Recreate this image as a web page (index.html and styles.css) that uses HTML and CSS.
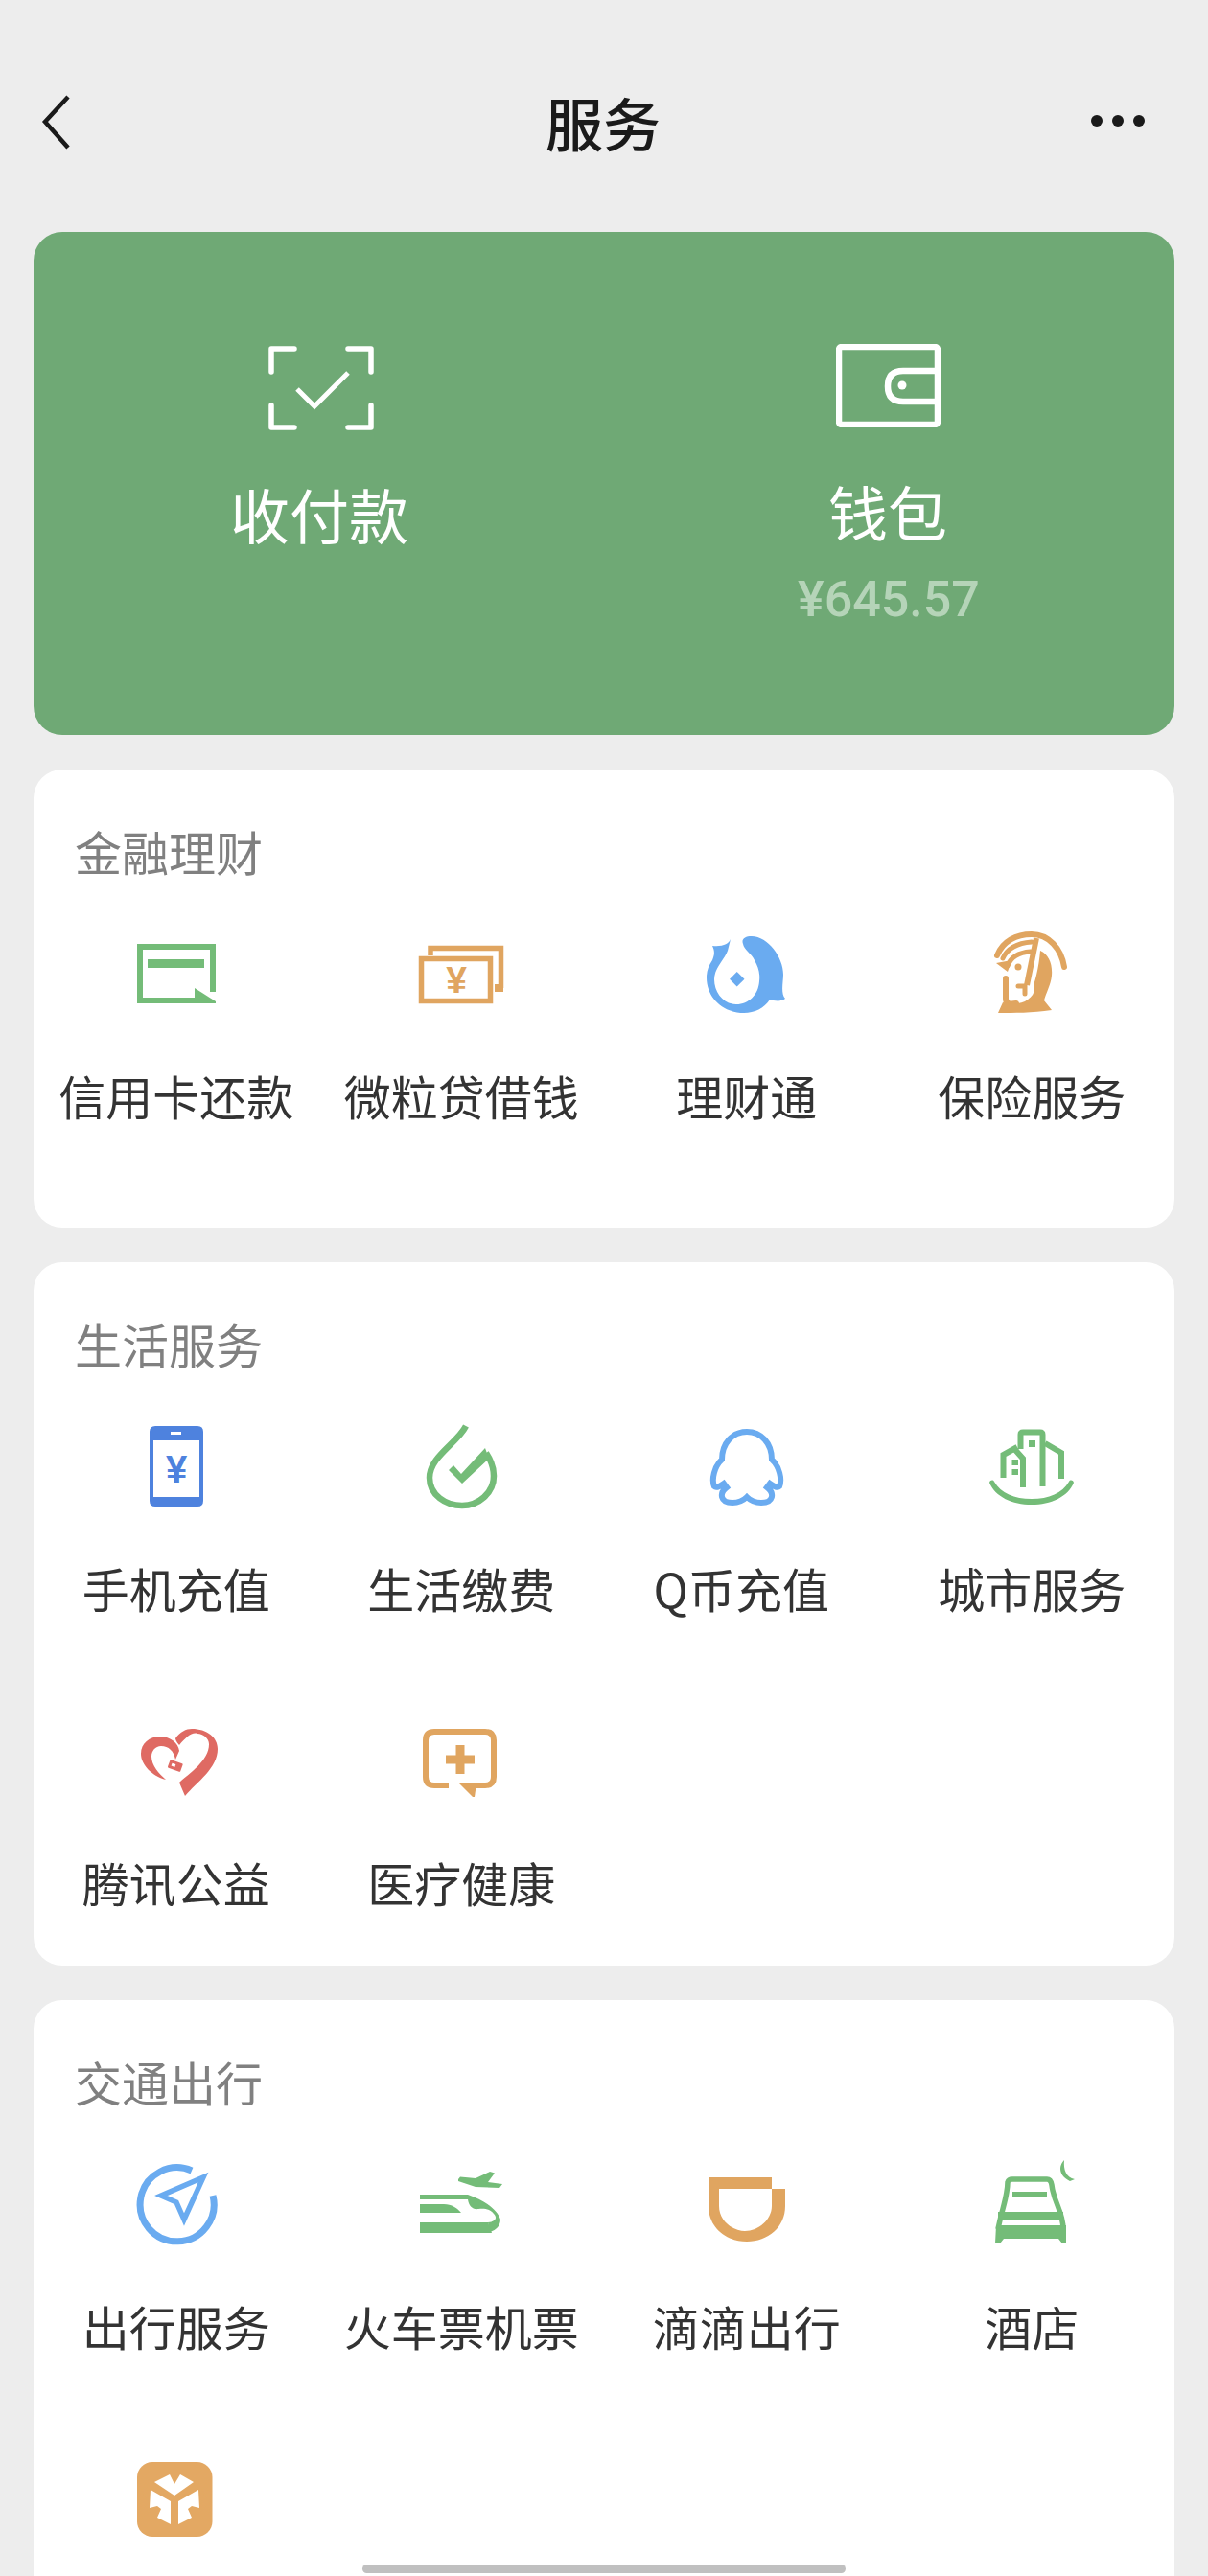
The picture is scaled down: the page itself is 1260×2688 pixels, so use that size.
FILE: index.html
```html
<!doctype html>
<html lang="zh-CN">
  <head>
    <meta charset="utf-8">
    <title>服务</title>
    <meta name="viewport" content="width=device-width, initial-scale=1">
    <link rel="stylesheet" href="styles.css">
  </head>
  <body>
    <header class="topbar">
      <svg class="back" width="32" height="58" viewBox="0 0 32 58"><path d="M28 2 L4 28 L28 55" fill="none" stroke="#1a1a1a" stroke-width="4.5"/></svg>
      <h1>服务</h1>
      <svg class="more" width="58" height="14" viewBox="0 0 58 14"><circle cx="7" cy="7" r="6"/><circle cx="29" cy="7" r="6"/><circle cx="51" cy="7" r="6"/></svg>
    </header>
    <main>
      <section class="hero">
        <div class="hero-item pay">
          <svg width="110" height="88" viewBox="0 0 110 88" fill="none" stroke="#fff" stroke-width="5.5" stroke-linejoin="round" stroke-linecap="round">
            <path d="M27 3 H3 V27 M83 3 H107 V27 M27 85 H3 V62 M83 85 H107 V62"/>
            <path d="M30 45 L48 63 L83 28" stroke-width="5" stroke-linecap="butt" stroke-linejoin="miter"/>
          </svg>
          <div class="hero-label">收付款</div>
        </div>
        <div class="hero-item wallet">
          <svg width="109" height="87" viewBox="0 0 109 87" fill="none" stroke="#fff" stroke-width="6.5">
            <rect x="3" y="3" width="103" height="81" rx="3"/>
            <path d="M106 28 H70 Q54 28 54 44 Q54 60 70 60 H106"/>
            <circle cx="69" cy="43" r="4.5" fill="#fff" stroke="none"/>
          </svg>
          <div class="hero-label">钱包</div>
          <div class="hero-amount">¥645.57</div>
        </div>
      </section>

      <section class="card card-tall">
        <h2>金融理财</h2>
        <div class="grid">
          <div class="item">
            <svg class="icon green" viewBox="0 0 100 100">
              <path class="line" d="M88 69 V22 H12 V78 H69" stroke-width="6"/>
              <rect x="20" y="35" width="59" height="9"/>
              <path d="M69 65 L91 79 V81 H69 Z"/>
            </svg>
            <div class="label">信用卡还款</div>
          </div>
          <div class="item">
            <svg class="icon orange" viewBox="0 0 100 100">
              <path class="line" d="M18 31 V23.5 H91.5 V65" stroke-width="5.5"/>
              <rect x="85" y="61" width="9" height="8"/>
              <rect class="line" x="8.5" y="34.5" width="72" height="44" stroke-width="5.5"/>
              <text class="yen yen-bold" x="45" y="70" font-size="39" text-anchor="middle">¥</text>
            </svg>
            <div class="label">微粒贷借钱</div>
          </div>
          <div class="item">
            <svg class="icon blue" viewBox="0 0 100 100">
              <path d="M33 14 C31 19 25 22 14 21 C17 27 16 31 14 36 C10 42 8 47 8 54 C8 75 25 91 47 91 C58 91 68 86 74 77 C78 78 85 80 90 76 C85 71 88 58 88 51 C88 33 72 11 55 11 C48 11 44 14 46 19 C47 25 55 29 58 36 C62 43 64 50 63 58 C62 72 52 82 39 82 C26 82 16 70 16 56 C16 44 27 35 30 26 C31 22 32 18 33 14 Z"/>
              <path d="M39.7 48 L47.5 55.7 L39.7 63.5 L32 55.7 Z"/>
            </svg>
            <div class="label">理财通</div>
          </div>
          <div class="item">
            <svg class="icon orange" viewBox="0 0 100 100">
              <g class="line" stroke-width="6" stroke-linecap="round">
                <path d="M14 31 C20 16 34 9 50 9 C68 9 81 24 84 43"/>
                <path d="M20 34 C25 23 36 18 50 17" stroke-width="5"/>
                <path d="M25 42 C28 33 36 28 49 27" stroke-width="5"/>
                <path d="M55 13 L45 62" stroke-linecap="butt"/>
                <path d="M23 55 V76 C23 82 28 82 34 81"/>
                <path d="M36 63 H43 V71" stroke-width="5"/>
              </g>
              <path d="M13 39 L29 36 L25 48 Z"/>
              <circle cx="36" cy="43" r="3.5"/>
              <path d="M59 26 C68 30 72 40 71 52 C70 62 65 70 63 78 L71 88 C50 91 32 91 15 91 L20 80 C30 82 40 82 46 77 C52 73 54 68 52 62 C56 50 58 38 59 26 Z"/>
            </svg>
            <div class="label">保险服务</div>
          </div>
        </div>
      </section>

      <section class="card">
        <h2>生活服务</h2>
        <div class="grid">
          <div class="item">
            <svg class="icon royal" viewBox="0 0 100 100">
              <path fill-rule="evenodd" d="M28 8 H72 Q78 8 78 14 V86 Q78 92 72 92 H28 Q22 92 22 86 V14 Q22 8 28 8 Z M26 23 V82 H74 V23 Z M44 14 V17 H55 V14 Z"/>
              <text class="yen yen-bold" x="50" y="67" font-size="40" text-anchor="middle">¥</text>
            </svg>
            <div class="label">手机充值</div>
          </div>
          <div class="item">
            <svg class="icon green" viewBox="0 0 100 100">
              <path class="line" d="M55 8 C46 26 17 40 17 62 C17 80 34 91 51 91 C68 91 84 78 84 60 C84 50 80 42 76 36" stroke-width="6.5"/>
              <path d="M75 31 L79 42 L51 68 L37 54 L42 49 L50 58 Z"/>
            </svg>
            <div class="label">生活缴费</div>
          </div>
          <div class="item">
            <svg class="icon blue" viewBox="0 0 100 100">
              <path class="line" d="M29 72 L26 68 C22 71 18 73 16 71 C13 64 16 50 24 43 C24 26 35 14 50 14 C65 14 76 26 76 43 C84 50 87 64 84 71 C82 73 78 71 74 68 L71 72 C79 78 78 88 65 88 C58 88 54 86 50 82 C46 86 42 88 35 88 C22 88 21 78 29 72 Z" stroke-width="6"/>
            </svg>
            <div class="label label-q">Q币充值</div>
          </div>
          <div class="item">
            <svg class="icon green" viewBox="0 0 100 100">
              <g class="line" stroke-width="6">
                <path d="M20.5 62 V38 L35 30"/>
                <path d="M33 33 L41 42 V72"/>
                <path d="M38.5 32 V17 Q38.5 14.500 41 14.500 H59 Q61.500 14.500 61.500 17 V71"/>
                <path d="M64 26 L81 36 V63"/>
              </g>
              <rect x="47" y="23" width="7" height="7"/>
              <rect x="29.500" y="43" width="6.500" height="6"/>
              <rect x="29.500" y="53" width="6.500" height="6"/>
              <path d="M6 67 C7 64 10 64 11 66 C18 78 32 84 50 84 C68 84 82 78 89 66 C90 64 93 64 94 67 C88 82 70 90 50 90 C30 90 12 82 6 67 Z"/>
            </svg>
            <div class="label">城市服务</div>
          </div>
          <div class="item">
            <svg class="icon red" viewBox="0 0 100 100">
              <path d="M39 70 C24 66 13 54 13 43 C13 32 22 25 33 25 C44 25 52 32 53 40 L49 49 C47 40 42 35 34 35 C28 35 24 40 24 46 C24 55 32 64 39 70 Z"/>
              <path d="M53 34 C50 31 49 28 49 27 C54 20 60 17 66 17 C82 17 93 26 93 38 C93 58 72 72 59 87 L53 73 C64 63 84 50 84 33 C84 27 78 22 72 22 C66 20 60 26 53 34 Z"/>
              <rect x="42" y="51" width="14" height="9" rx="1" transform="rotate(20 49 55)"/>
              <rect class="cut" x="45" y="54" width="4" height="3" transform="rotate(20 49 55)"/>
            </svg>
            <div class="label">腾讯公益</div>
          </div>
          <div class="item">
            <svg class="icon orange" viewBox="0 0 100 100">
              <path class="line" d="M37 76 H22 Q13 76 13 67 V29 Q13 20 22 20 H75 Q84 20 84 29 V67 Q84 76 75 76 H65" stroke-width="6"/>
              <path d="M47 73 L66 74 L64 88 L62 88 Z"/>
              <path d="M44.5 34 H53.5 V44.5 H64 V53.5 H53.5 V64 H44.5 V53.5 H34 V44.5 H44.5 Z"/>
            </svg>
            <div class="label">医疗健康</div>
          </div>
        </div>
      </section>

      <section class="card">
        <h2>交通出行</h2>
        <div class="grid">
          <div class="item">
            <svg class="icon blue" viewBox="0 0 100 100">
              <path class="line" d="M66 15 A38.5 38.5 0 1 0 88 41" stroke-width="7"/>
              <path class="line" d="M78 22 L34 41 L50 48 L58 66 Z" stroke-width="5.5"/>
            </svg>
            <div class="label">出行服务</div>
          </div>
          <div class="item">
            <svg class="icon green" viewBox="0 0 100 100">
              <path d="M47 24 L49 21.5 L65 23 L80 16 L85 17.5 L78 27 L93 29 L90 33 L65 32 L47 26 Z"/>
              <path d="M7 40 H57 C72 45 88 55 91 66 C91 72 87 77 80 79 L78 69 C86 68 88 64 84 60 C80 55 74 54 68 55 C62 56 58 52 57 45 H7 Z"/>
              <path d="M7 50 H32 C40 50 46 54 50 59 H7 Z"/>
              <path d="M7 69 H78 L82 80 H7 Z"/>
            </svg>
            <div class="label">火车票机票</div>
          </div>
          <div class="item">
            <svg class="icon orange" viewBox="0 0 100 100">
              <path fill-rule="evenodd" d="M10 22 H76 V34 H90 V52 C90 74 72 89 50 89 C28 89 10 74 10 52 Z M21 34 V52 C21 68 36 78 48 78 C62 78 76 66 76 52 V34 Z"/>
            </svg>
            <div class="label">滴滴出行</div>
          </div>
          <div class="item">
            <svg class="icon green" viewBox="0 0 100 100">
              <path d="M84 4 C78 10 78 20 90 26 L95 24 C86 22 83 14 84 4 Z"/>
              <path class="line" d="M15 76 C19 55 25 42 25 27 Q26 24 30 24 H66 Q70 24 71 30 C73 48 83 58 83 76" stroke-width="5.5"/>
              <rect x="30" y="37" width="36" height="5.5"/>
              <rect x="15" y="58" width="68" height="9"/>
              <path d="M13 72 H86 V91 H82 L78 86 H21 L17 91 H12 Z"/>
            </svg>
            <div class="label">酒店</div>
          </div>
          <div class="item">
            <svg class="icon sand" viewBox="0 0 100 100">
              <rect x="9" y="12" width="78.5" height="78" rx="16"/>
              <g class="cut">
                <path d="M43 25 L48 35 L54 25 L68 33 L48 47 L27 33 Z"/>
                <path d="M23 41 L44 53 V77 L30 70 L34 61 L30 58 L22 60 Z"/>
                <path d="M73 41 L52 53 V77 L66 70 L62 61 L66 58 L74 60 Z"/>
              </g>
            </svg>
          </div>
        </div>
      </section>
    </main>
    <div class="home-bar"></div>
  </body>
</html>
```

FILE: styles.css
```css
html {
  box-sizing: border-box;
}
*, *::before, *::after {
  box-sizing: inherit;
}
body {
  margin: 0;
  height: 2688px;
  overflow: hidden;
  position: relative;
  background: #ededed;
  font-family: "Noto Sans CJK SC", "Liberation Sans", sans-serif;
  color: #333;
}
.topbar {
  height: 242px;
  padding: 98px 65px 0 43px;
  display: grid;
  grid-template-columns: 1fr 120px 1fr;
  align-items: start;
}
.topbar h1 {
  margin: -3px 0 0 10px;
  width: 120px;
  font-size: 60px;
  line-height: 64px;
  font-weight: 500;
  color: #1a1a1a;
}
.back {
  display: block;
  margin-top: 1px;
}
.more {
  display: block;
  justify-self: end;
  margin-top: 21px;
  fill: #1a1a1a;
}
main {
  padding: 0 35px;
  display: flex;
  flex-direction: column;
  gap: 36px;
}
.hero {
  height: 525px;
  border-radius: 30px;
  background: #6fa975;
  display: grid;
  grid-template-columns: 1fr 1fr;
  color: #fff;
}
.hero-item {
  display: flex;
  flex-direction: column;
  align-items: center;
}
.hero-item svg {
  display: block;
}
.pay {
  padding-top: 119px;
  padding-left: 4px;
}
.wallet {
  padding-top: 117px;
  padding-right: 3px;
}
.pay .hero-label {
  margin-right: 3px;
}
.hero-label {
  font-size: 62px;
  line-height: 80px;
  margin-top: 47px;
}
.hero-amount {
  font-family: Roboto, "Liberation Sans", sans-serif;
  font-size: 52px;
  line-height: 60px;
  margin-top: 23px;
  margin-left: 2px;
  color: #b5d4b8;
  font-weight: 500;
}
.card {
  background: #fff;
  border-radius: 30px;
  padding: 53px 0 53px;
}
.card-tall {
  padding-bottom: 104px;
}
.card h2 {
  margin: 0 0 46px 43px;
  font-size: 49px;
  line-height: 64px;
  font-weight: 400;
  color: #808080;
}
.grid {
  display: grid;
  grid-template-columns: repeat(4, 1fr);
  row-gap: 96px;
}
.item {
  display: flex;
  flex-direction: column;
  align-items: center;
  height: 211px;
}
.icon {
  display: block;
  width: 100px;
  height: 100px;
  flex: none;
  fill: currentColor;
}
.line {
  fill: none;
  stroke: currentColor;
}
.cut {
  fill: #fff;
}
.green { color: #74bc78; }
.orange { color: #e0a560; }
.sand { color: #e3a863; }
.blue { color: #6aabf0; }
.royal { color: #4e82de; }
.red { color: #df6a63; }
.yen {
  font-family: "Liberation Sans", sans-serif;
}
.yen-bold {
  font-weight: 700;
}
.label {
  margin-top: 45px;
  font-size: 49px;
  line-height: 64px;
  white-space: nowrap;
}
.label-q {
  margin-right: 11px;
}
.home-bar {
  position: absolute;
  left: 378px;
  bottom: 3px;
  width: 504px;
  height: 9px;
  border-radius: 5px;
  background: #c0c0c0;
}
```
